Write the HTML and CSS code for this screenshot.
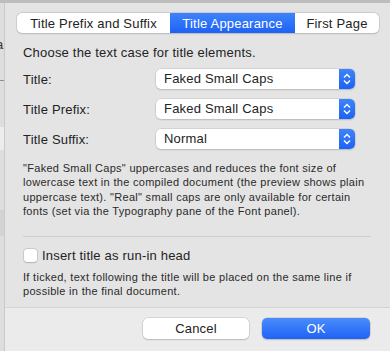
FILE: index.html
```html
<!DOCTYPE html>
<html lang="en">
<head>
    <meta charset="UTF-8">
    <title>Title Options</title>
    <link rel="stylesheet" href="styles.css">
</head>
<body>
    <div class="window">
        <div class="side-strip">
            <div class="strip-letter">a</div>
            <div class="strip-rule"></div>
            <div class="strip-light"></div>
            <div class="strip-dark"></div>
        </div>
        <div class="sheet">
            <div class="sheet-body">
                <div class="tabs">
                    <div class="tab tab-first">Title Prefix and Suffix</div>
                    <div class="tab tab-active">Title Appearance</div>
                    <div class="tab tab-last">First Page</div>
                </div>

                <p class="intro">Choose the text case for title elements.</p>

                <div class="rows">
                    <div class="row">
                        <span class="row-label">Title:</span>
                        <div class="popup">
                            <span class="popup-value">Faked Small Caps</span>
                            <span class="popup-arrows">
                                <svg width="8" height="12" viewBox="0 0 8 12"><path d="M1 4.5 L4 1.5 L7 4.5 M1 7.5 L4 10.5 L7 7.5" fill="none" stroke="#fff" stroke-width="1.4"/></svg>
                            </span>
                        </div>
                    </div>
                    <div class="row">
                        <span class="row-label">Title Prefix:</span>
                        <div class="popup">
                            <span class="popup-value">Faked Small Caps</span>
                            <span class="popup-arrows">
                                <svg width="8" height="12" viewBox="0 0 8 12"><path d="M1 4.5 L4 1.5 L7 4.5 M1 7.5 L4 10.5 L7 7.5" fill="none" stroke="#fff" stroke-width="1.4"/></svg>
                            </span>
                        </div>
                    </div>
                    <div class="row">
                        <span class="row-label">Title Suffix:</span>
                        <div class="popup">
                            <span class="popup-value">Normal</span>
                            <span class="popup-arrows">
                                <svg width="8" height="12" viewBox="0 0 8 12"><path d="M1 4.5 L4 1.5 L7 4.5 M1 7.5 L4 10.5 L7 7.5" fill="none" stroke="#fff" stroke-width="1.4"/></svg>
                            </span>
                        </div>
                    </div>
                </div>

                <p class="note">"Faked Small Caps" uppercases and reduces the font size of lowercase text in the compiled document (the preview shows plain uppercase text). "Real" small caps are only available for certain fonts (set via the Typography pane of the Font panel).</p>

                <div class="separator"></div>

                <label class="check-row">
                    <span class="checkbox"></span>
                    <span>Insert title as run-in head</span>
                </label>

                <p class="note help">If ticked, text following the title will be placed on the same line if possible in the final document.</p>
            </div>

            <div class="footer">
                <button class="btn">Cancel</button>
                <button class="btn btn-primary">OK</button>
            </div>
        </div>
    </div>
</body>
</html>
```

FILE: styles.css
```css
body {
    margin: 0;
    padding: 0;
    font-family: "Liberation Sans", Arial, sans-serif;
    color: #232323;
    background-color: #e4e4e4;
}
.window {
    display: flex;
    height: 351px;
    border-top: 3px solid #bdbdbd;
    box-sizing: border-box;
    overflow: hidden;
}
.side-strip {
    flex-shrink: 0;
    width: 4px;
    background-color: #dedede;
    border-right: 1px solid #c9c9c9;
    display: flex;
    flex-direction: column;
    overflow: hidden;
}
.strip-letter {
    font-size: 13px;
    line-height: 16px;
    margin-top: 34px;
    margin-left: -4px;
    color: #333;
}
.strip-rule {
    height: 1px;
    margin-top: 27px;
    background-color: #8e8e8e;
}
.strip-light {
    height: 23px;
    margin-top: 46px;
    background-color: #ededed;
}
.strip-dark {
    height: 26px;
    margin-top: 60px;
    background-color: #d3d3d3;
}
.sheet {
    flex: 1;
    min-width: 0;
    display: flex;
    flex-direction: column;
    background-color: #e4e4e4;
}
.sheet-body {
    padding: 10px 19px 0 18px;
    flex: 1;
    border-bottom: 1px solid #d4d4d4;
    letter-spacing: 0.2px;
}
.tabs {
    display: flex;
    width: 362px;
    height: 20px;
    margin-left: -6px;
    background-color: #fff;
    border-radius: 5px;
    box-shadow: 0 0 0 0.5px #bcbcbc, 0 0.5px 1.5px rgba(0, 0, 0, 0.18);
    font-size: 13px;
}
.tab {
    display: flex;
    justify-content: center;
    align-items: center;
}
.tab-first {
    width: 153px;
}
.tab-active {
    width: 125px;
    color: #fff;
    background: linear-gradient(#3d84fb, #1e61f5);
}
.tab-last {
    flex: 1;
}
.intro {
    margin: 12px 0 0 0;
    font-size: 13px;
    line-height: 16px;
}
.rows {
    display: flex;
    flex-direction: column;
    gap: 10px;
    margin-top: 8px;
}
.row {
    display: flex;
    align-items: center;
    height: 20px;
}
.row-label {
    width: 133px;
    font-size: 13px;
}
.popup {
    display: flex;
    width: 199px;
    height: 20px;
    background-color: #fff;
    border-radius: 5px;
    box-shadow: 0 0 0 0.5px #c2c2c2, 0 1px 1.5px rgba(0, 0, 0, 0.2);
    overflow: hidden;
}
.popup-value {
    flex: 1;
    padding-left: 8px;
    font-size: 13px;
    line-height: 20px;
}
.popup-arrows {
    width: 16px;
    display: flex;
    justify-content: center;
    align-items: center;
    background: linear-gradient(#3d84fb, #1e61f5);
}
.note {
    margin: 12px 0 0 0;
    font-size: 11px;
    line-height: 14.3px;
    letter-spacing: 0.3px;
    color: #2a2a2a;
}
.separator {
    height: 1px;
    margin-top: 18px;
    background-color: #cdcdcd;
}
.check-row {
    display: flex;
    align-items: center;
    gap: 5px;
    height: 16px;
    margin-top: 10px;
    font-size: 13px;
}
.checkbox {
    width: 13px;
    height: 13px;
    margin-left: 1px;
    box-sizing: border-box;
    background-color: #fff;
    border-radius: 3px;
    box-shadow: 0 0 0 0.5px #b4b4b4, 0 0.5px 1px rgba(0, 0, 0, 0.2);
}
.help {
    margin-top: 7px;
}
.footer {
    flex-shrink: 0;
    height: 43px;
    display: flex;
    justify-content: flex-end;
    align-items: flex-start;
    gap: 13px;
    padding: 10px 20px 0 0;
    box-sizing: border-box;
    background-color: #ebebeb;
}
.btn {
    width: 106px;
    height: 21px;
    border: none;
    border-radius: 5px;
    background-color: #fff;
    box-shadow: 0 0 0 0.5px #c0c0c0, 0 1px 1.5px rgba(0, 0, 0, 0.2);
    font-family: inherit;
    font-size: 13px;
    letter-spacing: 0.2px;
    color: #232323;
    padding: 0;
}
.btn-primary {
    width: 108px;
    color: #fff;
    background: linear-gradient(#4a8cfb, #1f63f5);
}
```
